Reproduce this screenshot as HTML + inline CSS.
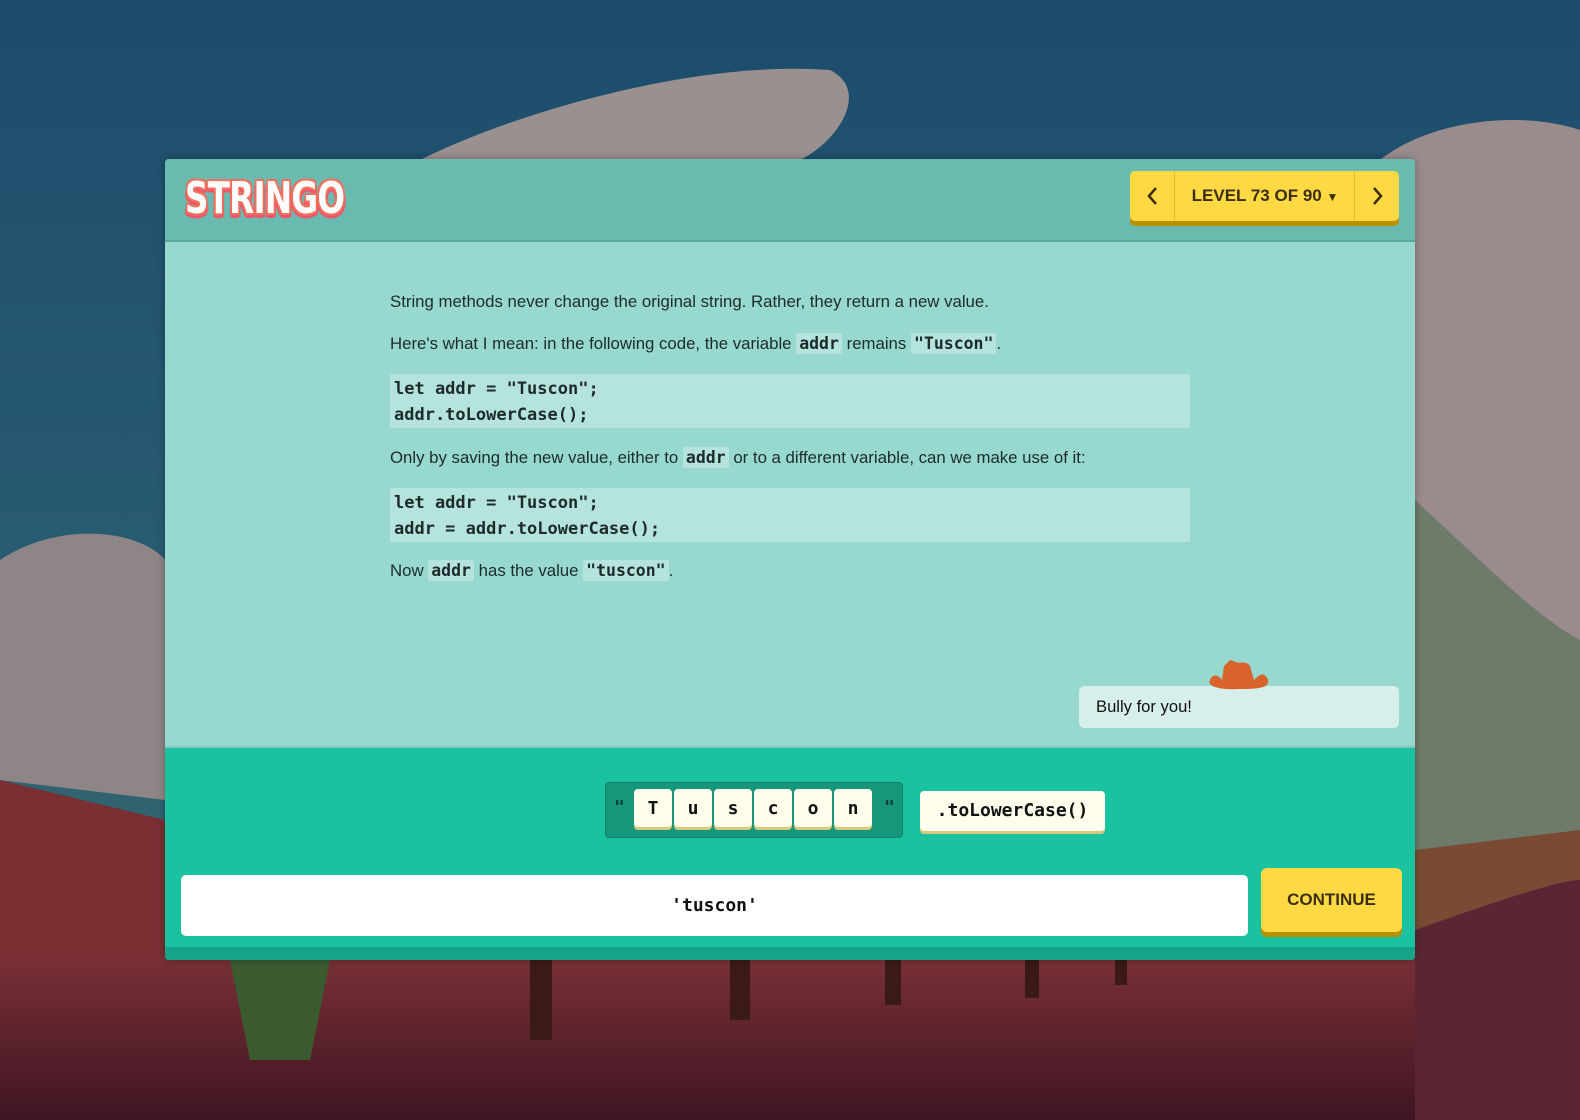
<!DOCTYPE html>
<html><head><meta charset="utf-8"><style>
*{margin:0;padding:0;box-sizing:border-box}
body{width:1580px;height:1120px;overflow:hidden;position:relative;font-family:"Liberation Sans",sans-serif;background:#1f4d6a}
.abs{position:absolute}
.mono{font-family:"DejaVu Sans Mono","Liberation Mono",monospace;font-weight:bold}
.txt{position:absolute;left:390px;font-size:16.8px;color:#1d2b2b;white-space:nowrap}
.ic{background:#b5e3dd;padding:1px 3px;border-radius:2px;font-size:16.5px}
.code{position:absolute;left:390px;width:800px;background:#b5e3dd;border-radius:2px;font-size:17px;line-height:26px;padding:2px 4px;color:#1d2b2b}
.tile{position:absolute;top:6px;width:38px;height:38px;background:#fffdec;border-radius:4px;box-shadow:0 3px 0 #d9c97e;font-size:18px;text-align:center;line-height:40px;color:#111}
</style></head><body>
<svg class="abs" style="left:0;top:0" width="1580" height="1120">
<defs><linearGradient id="sky" x1="0" y1="0" x2="0" y2="1"><stop offset="0" stop-color="#1c4c6c"/><stop offset="0.6" stop-color="#2a5f73"/><stop offset="1" stop-color="#3f6b6a"/></linearGradient>
<linearGradient id="gr" x1="0" y1="0" x2="0" y2="1"><stop offset="0" stop-color="#7a3036"/><stop offset="1" stop-color="#3e1522"/></linearGradient></defs>
<rect width="1580" height="1120" fill="url(#sky)"/>
<path d="M420 160 C520 110 700 60 830 70 C870 90 840 140 800 160 Z" fill="#9a9090"/>
<path d="M1380 160 C1430 120 1520 110 1580 130 L1580 900 L1415 900 Z" fill="#9a8c8c"/>
<path d="M0 560 C60 520 140 530 165 560 L165 800 L0 780 Z" fill="#8e8686"/>
<path d="M1415 500 C1480 560 1540 620 1580 640 L1580 860 L1415 860 Z" fill="#6e7a6a"/>
<path d="M0 780 L165 820 L165 1120 L0 1120 Z" fill="#7a2f33"/>
<rect x="0" y="955" width="1580" height="165" fill="url(#gr)"/>
<path d="M1415 850 L1580 830 L1580 960 L1415 960 Z" fill="#7a4a35"/>
<path d="M1415 930 C1500 900 1560 880 1580 880 L1580 1120 L1415 1120 Z" fill="#5a2633"/>
<g fill="#3a1a18"><rect x="530" y="960" width="22" height="80"/><rect x="730" y="960" width="20" height="60"/><rect x="885" y="960" width="16" height="45"/><rect x="1025" y="960" width="14" height="38"/><rect x="1115" y="960" width="12" height="25"/></g>
<path d="M230 960 L250 1060 L310 1060 L330 960 Z" fill="#3a5a30"/>
</svg>
<div class="abs" style="left:165px;top:159px;width:1250px;height:801px;background:#97d8cf;border-radius:4px;overflow:hidden;box-shadow:0 0 8px rgba(0,0,0,.3)">
 <div class="abs" style="left:0;top:0;width:1250px;height:83px;background:#68bbae;border-bottom:2px solid #5aa89c"></div>
 <div class="abs" style="left:20px;top:14px;font-family:'DejaVu Sans',sans-serif;font-weight:900;font-size:44px;color:#fff;letter-spacing:-1px;transform:scaleX(0.74);transform-origin:left;text-shadow:2px 0 0 #f0705e,-2px 0 0 #f0705e,0 2px 0 #f0705e,0 -2px 0 #f0705e,2px 2px 0 #f0705e,-2px -2px 0 #f0705e,2px -2px 0 #f0705e,-2px 2px 0 #f0705e,0 5px 0 #f0546a,3px 4px 0 #f0546a,-3px 4px 0 #f0546a">STRINGO</div>
 <div class="abs" style="left:965px;top:12px;width:269px;height:50px;background:#ffd944;border-radius:5px;box-shadow:0 5px 0 #b89000;color:#3a2e10;font-weight:bold;font-size:17px">
  <div class="abs" style="left:0;top:0;width:45px;height:50px;border-right:1px solid #e8bf20"><svg width="45" height="50"><path d="M26 17 L19 25 L26 33" stroke="#3a2e10" stroke-width="2.5" fill="none"/></svg></div>
  <div class="abs" style="left:45px;top:0;width:180px;height:50px;text-align:center;line-height:50px">LEVEL 73 OF 90 <span style="font-size:12px">▼</span></div>
  <div class="abs" style="left:224px;top:0;width:45px;height:50px;border-left:1px solid #e8bf20"><svg width="45" height="50"><path d="M19 17 L26 25 L19 33" stroke="#3a2e10" stroke-width="2.5" fill="none"/></svg></div>
 </div>
 <div class="abs" style="left:0;top:587px;width:1250px;height:214px;background:#1ac2a0;border-top:2px solid #7fc8bd"></div>
 <div class="abs" style="left:0;top:788px;width:1250px;height:13px;background:#15a487"></div>
</div>
<div class="txt" style="top:292px">String methods never change the original string. Rather, they return a new value.</div>
<div class="txt" style="top:334px">Here's what I mean: in the following code, the variable <span class="ic mono">addr</span> remains <span class="ic mono">"Tuscon"</span>.</div>
<div class="code mono" style="top:374px;height:54px">let addr = "Tuscon";<br>addr.toLowerCase();</div>
<div class="txt" style="top:448px">Only by saving the new value, either to <span class="ic mono">addr</span> or to a different variable, can we make use of it:</div>
<div class="code mono" style="top:488px;height:54px">let addr = "Tuscon";<br>addr = addr.toLowerCase();</div>
<div class="txt" style="top:561px">Now <span class="ic mono">addr</span> has the value <span class="ic mono">"tuscon"</span>.</div>
<div class="abs" style="left:1079px;top:686px;width:320px;height:42px;background:#d6efeb;border-radius:5px;font-size:16.6px;line-height:42px;padding-left:17px;color:#111">Bully for you!</div>
<svg class="abs" style="left:1206px;top:658px" width="66" height="36"><path d="M4 22 C0 30 20 32 34 31 C52 31 64 30 62 22 C58 12 52 18 48 22 L44 8 C40 2 34 6 30 4 L24 2 L18 8 L16 22 C12 16 6 16 4 22Z" fill="#d9642b"/></svg>
<div class="abs" style="left:605px;top:782px;width:298px;height:56px;background:#16977c;border-radius:4px;border:1px solid #128068">
 <div class="abs mono" style="left:8px;top:14px;color:#0b3d33;font-size:18px">"</div>
 <div class="tile mono" style="left:28px">T</div><div class="tile mono" style="left:68px">u</div><div class="tile mono" style="left:108px">s</div><div class="tile mono" style="left:148px">c</div><div class="tile mono" style="left:188px">o</div><div class="tile mono" style="left:228px">n</div>
 <div class="abs mono" style="left:278px;top:14px;color:#0b3d33;font-size:18px">"</div>
</div>
<div class="abs mono" style="left:920px;top:791px;width:185px;height:40px;background:#fffdec;border-radius:4px;box-shadow:0 3px 0 #d9c97e;font-size:18px;line-height:40px;text-align:center;color:#111">.toLowerCase()</div>
<div class="abs mono" style="left:181px;top:875px;width:1067px;height:61px;background:#fff;border-radius:5px;text-align:center;line-height:61px;font-size:18px;color:#111">'tuscon'</div>
<div class="abs" style="left:1261px;top:868px;width:141px;height:64px;background:#ffd944;border-radius:6px;box-shadow:0 5px 0 #b89000;text-align:center;line-height:64px;font-weight:bold;font-size:17px;color:#3a2e10">CONTINUE</div>
</body></html>
